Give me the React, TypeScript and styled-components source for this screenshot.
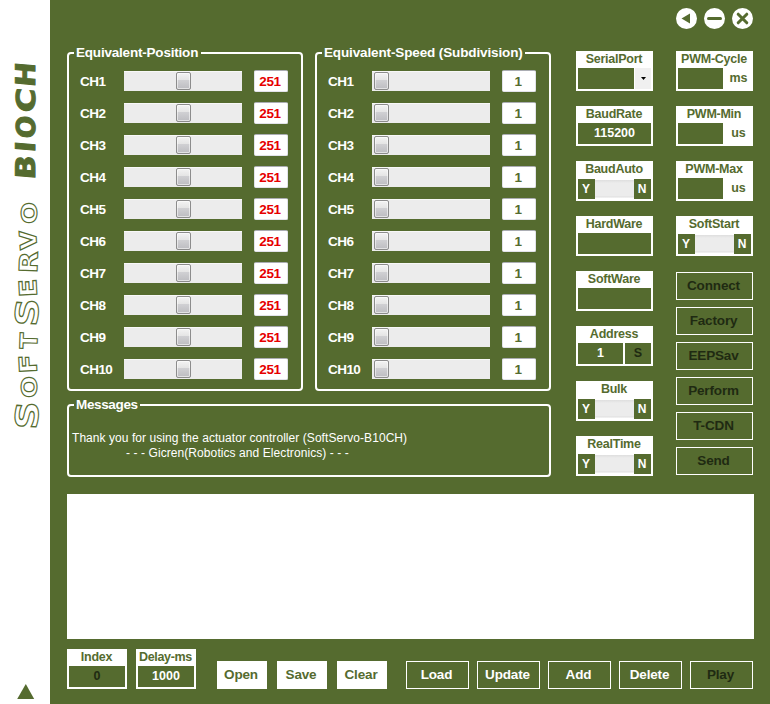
import React from 'react';
import styled, { createGlobalStyle } from 'styled-components';

const olive = '#556b2f';
const ink = '#1f2a12';

const GlobalStyle = createGlobalStyle`
  * { box-sizing: border-box; }
  body { margin: 0; background: #fff; }
`;

const Window = styled.div`
  display: flex;
  width: 770px;
  height: 704px;
  overflow: hidden;
  background: ${olive};
  font-family: 'Liberation Sans', Arial, sans-serif;
  font-weight: bold;
  font-size: 13px;
  line-height: 15px;
  white-space: nowrap;
`;

const Rail = styled.aside`
  flex: none;
  width: 50px;
  height: 704px;
  background: #fff;
  svg { display: block; }
`;

const Main = styled.main`
  flex: 1;
  display: flex;
  flex-direction: column;
  padding: 0 16px 0 17px;
`;

const TitleBar = styled.header`
  display: flex;
  justify-content: flex-end;
  gap: 7px;
  height: 51px;
  padding: 8px 1px 0 0;
`;

const RoundButton = styled.button`
  width: 21px;
  height: 21px;
  padding: 0;
  border: 0;
  border-radius: 50%;
  background: #fff;
  svg { display: block; }
`;

const Body = styled.div`
  display: flex;
  height: 443px;
`;

const LeftColumn = styled.div`
  width: 484px;
  padding-top: 1px;
`;

const Groups = styled.div`
  display: flex;
  justify-content: space-between;
`;

const Group = styled.section<{ $h: number }>`
  position: relative;
  width: 236px;
  height: ${p => p.$h}px;
  border: 2px solid #fff;
  border-radius: 4px;
  padding: 16px 0 0 11px;
`;

const MessageGroup = styled(Group)`
  width: 484px;
  margin-top: 13px;
  padding: 25px 0 0 3px;
`;

const Legend = styled.h2<{ $w: number; $ls: number }>`
  position: absolute;
  top: -10px;
  left: 5px;
  width: ${p => p.$w}px;
  margin: 0;
  padding-left: 2px;
  background: ${olive};
  color: #fff;
  font-size: 13.5px;
  line-height: 17px;
  letter-spacing: ${p => p.$ls}px;
`;

const Channel = styled.div`
  display: flex;
  align-items: center;
  height: 22px;
  margin-bottom: 10px;
`;

const ChannelName = styled.label`
  width: 44px;
  color: #fff;
  font-size: 13.5px;
  letter-spacing: -0.55px;
`;

const Track = styled.div<{ $start: number }>`
  width: 118px;
  height: 20px;
  padding: 1px 0 0 ${p => p.$start}px;
  background: #ececec;
  border-top: 1px solid #f8f8f8;
`;

const Thumb = styled.div`
  width: 15px;
  height: 18px;
  margin-top: -1px;
  border: 1px solid #8c8c8c;
  border-radius: 2px;
  background: linear-gradient(#f3f3f3 0, #e4e4e4 45%, #d0d0d3 46%, #bdbdc1 100%);
  box-shadow: inset 0 0 0 1px rgba(255, 255, 255, 0.55);
`;

const Value = styled.output<{ $red?: boolean }>`
  width: 34px;
  height: 22px;
  margin-left: 12px;
  padding-right: 2px;
  border: 1px solid #e2e3ea;
  border-top-color: #abadb3;
  border-radius: 2px;
  background: #fff;
  color: ${p => (p.$red ? '#e60000' : olive)};
  font-size: 13.5px;
  line-height: 21px;
  letter-spacing: -0.4px;
  text-align: center;
`;

const Message = styled.p<{ $indent?: number; $ls: number }>`
  margin: 0;
  padding-left: ${p => p.$indent ?? 0}px;
  color: #fff;
  font-size: 12px;
  font-weight: normal;
  line-height: 15px;
  letter-spacing: ${p => p.$ls}px;
`;

const FieldColumn = styled.div<{ $ml: number }>`
  display: flex;
  flex-direction: column;
  gap: 15px;
  width: 77px;
  margin-left: ${p => p.$ml}px;
`;

const Field = styled.div<{ $w?: number }>`
  width: ${p => p.$w ?? 77}px;
  height: 40px;
  padding: 0 2px;
  background: #fff;
`;

const FieldLabel = styled.div<{ $ls?: number }>`
  height: 17px;
  padding-right: 1px;
  color: ${olive};
  font-size: 12.5px;
  line-height: 16px;
  text-align: center;
  letter-spacing: ${p => p.$ls ?? -0.25}px;
`;

const FieldRow = styled.div`
  display: flex;
  height: 21px;
  gap: 2px;
`;

const Cell = styled.div<{ $w?: number; $dark?: boolean }>`
  ${p => (p.$w ? `width: ${p.$w}px;` : 'flex: 1;')}
  background: ${olive};
  color: ${p => (p.$dark ? ink : '#fff')};
  font-size: 12.5px;
  line-height: 21px;
  text-align: center;
`;

const Unit = styled.span`
  flex: 1;
  padding-left: 1px;
  color: ${olive};
  font-size: 12.5px;
  line-height: 21px;
  text-align: center;
`;

const DropButton = styled.button`
  display: flex;
  align-items: center;
  justify-content: center;
  width: 16px;
  height: 21px;
  margin-left: -1px;
  padding: 0;
  border: 0;
  background: #f0f0f0;
`;

const SwitchRow = styled.div`
  display: flex;
  height: 20px;
  margin-top: 1px;
`;

const SwitchEnd = styled.span`
  width: 17px;
  padding-right: 1px;
  background: ${olive};
  color: #fff;
  font-size: 12px;
  line-height: 21px;
  text-align: center;
`;

const SwitchTrack = styled.span`
  flex: 1;
  margin-top: 1px;
  background: linear-gradient(#dedede 0, #ececec 3px, #ececec 16px, #dedede 17px, #fff 18px);
`;

const ButtonStack = styled.div`
  display: flex;
  flex-direction: column;
  gap: 7px;
  margin-top: 1px;
`;

const Button = styled.button<{ $w: number; $kind?: 'solid' | 'disabled' }>`
  width: ${p => p.$w}px;
  height: 28px;
  padding: 0 2px 0 0;
  border: 1px solid #fff;
  background: ${p => (p.$kind === 'solid' ? '#fff' : olive)};
  color: ${p => (p.$kind === 'solid' ? olive : p.$kind === 'disabled' ? ink : '#fff')};
  font: bold 13.5px/26px 'Liberation Sans', Arial, sans-serif;
  letter-spacing: -0.15px;
`;

const Sheet = styled.div`
  width: 687px;
  height: 145px;
  background: #fff;
`;

const Footer = styled.footer`
  display: flex;
  align-items: flex-end;
  height: 50px;
`;

const FooterGroup = styled.div<{ $ml: number; $gap: number }>`
  display: flex;
  gap: ${p => p.$gap}px;
  margin-left: ${p => p.$ml}px;
`;

type Glyph = [char: string, bottom: number, length: number, size: number, tilt: number];

// Each letter sits on its own start point along the vertical baseline.
const outlined: Glyph[] = [
  ['S', 430, 28, 31, 4],
  ['O', 398, 22, 22, 0],
  ['F', 373, 19, 24, -3],
  ['T', 349, 16, 24, 2],
  ['S', 327, 28, 31, 4],
  ['E', 296.5, 18, 24, -3],
  ['R', 273.5, 22, 25, 2],
  ['V', 249, 19, 23, -4],
  ['O', 224, 22, 22, 0],
];

const solid: Glyph[] = [
  ['B', 180, 24, 27, 0],
  ['I', 153, 11, 27, 0],
  ['O', 139, 22.5, 26, 0],
  ['C', 113, 24, 26, 0],
  ['H', 87.5, 24.5, 27, 0],
];

function Wordmark() {
  return (
    <svg width="50" height="704" viewBox="0 0 50 704">
      <g fill="#fff" stroke={olive} strokeWidth="1.1" fontFamily="'DejaVu Sans', sans-serif" fontWeight="bold">
        {outlined.map(([c, y, len, size, tilt], i) => (
          <text key={i} transform={`translate(37 ${y}) rotate(${-90 + tilt})`} fontSize={size} textLength={len} lengthAdjust="spacingAndGlyphs">{c}</text>
        ))}
      </g>
      <g fill={olive} stroke={olive} strokeWidth="1" fontFamily="'DejaVu Sans', sans-serif" fontWeight="bold">
        {solid.map(([c, y, len, size], i) => (
          <text key={i} transform={`translate(35.2 ${y}) rotate(-90) skewX(-5)`} fontSize={size} textLength={len} lengthAdjust="spacingAndGlyphs">{c}</text>
        ))}
      </g>
      <path d="M25.8 684 L34.2 699 H17.2 Z" fill={olive} />
    </svg>
  );
}

const channels = Array.from({ length: 10 }, (_, i) => `CH${i + 1}`);

function ChannelGroup({ title, width, spacing, start, value, red }: {
  title: string; width: number; spacing: number; start: number; value: string; red?: boolean;
}) {
  return (
    <Group $h={339}>
      <Legend $w={width} $ls={spacing}>{title}</Legend>
      {channels.map(name => (
        <Channel key={name}>
          <ChannelName>{name}</ChannelName>
          <Track $start={start}><Thumb /></Track>
          <Value $red={red}>{value}</Value>
        </Channel>
      ))}
    </Group>
  );
}

function TextField({ label, value }: { label: string; value?: string }) {
  return (
    <Field>
      <FieldLabel>{label}</FieldLabel>
      <FieldRow><Cell>{value}</Cell></FieldRow>
    </Field>
  );
}

function UnitField({ label, unit }: { label: string; unit: string }) {
  return (
    <Field>
      <FieldLabel>{label}</FieldLabel>
      <FieldRow><Cell $w={45} /><Unit>{unit}</Unit></FieldRow>
    </Field>
  );
}

function SwitchField({ label }: { label: string }) {
  return (
    <Field>
      <FieldLabel>{label}</FieldLabel>
      <SwitchRow><SwitchEnd>Y</SwitchEnd><SwitchTrack /><SwitchEnd>N</SwitchEnd></SwitchRow>
    </Field>
  );
}

export default function App() {
  return (
    <>
      <GlobalStyle />
      <Window>
        <Rail><Wordmark /></Rail>
        <Main>
          <TitleBar>
            <RoundButton aria-label="Back">
              <svg width="21" height="21"><path d="M5.5 10.5 L14 5.5 V15.5 Z" fill={olive} /></svg>
            </RoundButton>
            <RoundButton aria-label="Minimize">
              <svg width="21" height="21"><path d="M4.5 10.5 H16.5" stroke={olive} strokeWidth="3" strokeLinecap="round" /></svg>
            </RoundButton>
            <RoundButton aria-label="Close">
              <svg width="21" height="21"><path d="M6.2 6.2 L14.8 14.8 M14.8 6.2 L6.2 14.8" stroke={olive} strokeWidth="3" strokeLinecap="round" /></svg>
            </RoundButton>
          </TitleBar>
          <Body>
            <LeftColumn>
              <Groups>
                <ChannelGroup title="Equivalent-Position" width={127} spacing={-0.2} start={52} value="251" red />
                <ChannelGroup title="Equivalent-Speed (Subdivision)" width={203} spacing={-0.13} start={2} value="1" />
              </Groups>
              <MessageGroup as="section" $h={73}>
                <Legend $w={66} $ls={-0.35}>Messages</Legend>
                <Message $ls={0.06}>Thank you for using the actuator controller (SoftServo-B10CH)</Message>
                <Message $indent={54} $ls={0.08}>- - - Gicren(Robotics and Electronics) - - -</Message>
              </MessageGroup>
            </LeftColumn>
            <FieldColumn $ml={25}>
              <Field>
                <FieldLabel>SerialPort</FieldLabel>
                <FieldRow>
                  <Cell $w={56} />
                  <DropButton aria-label="Choose port">
                    <svg width="5" height="3"><path d="M0 0 H5 L2.5 3 Z" fill="#000" /></svg>
                  </DropButton>
                </FieldRow>
              </Field>
              <TextField label="BaudRate" value="115200" />
              <SwitchField label="BaudAuto" />
              <TextField label="HardWare" />
              <TextField label="SoftWare" />
              <Field>
                <FieldLabel>Address</FieldLabel>
                <FieldRow><Cell $w={45}>1</Cell><Cell $dark>S</Cell></FieldRow>
              </Field>
              <SwitchField label="Bulk" />
              <SwitchField label="RealTime" />
            </FieldColumn>
            <FieldColumn $ml={23}>
              <UnitField label="PWM-Cycle" unit="ms" />
              <UnitField label="PWM-Min" unit="us" />
              <UnitField label="PWM-Max" unit="us" />
              <SwitchField label="SoftStart" />
              <ButtonStack>
                {['Connect', 'Factory', 'EEPSav', 'Perform', 'T-CDN', 'Send'].map(t => (
                  <Button key={t} $w={77} $kind="disabled">{t}</Button>
                ))}
              </ButtonStack>
            </FieldColumn>
          </Body>
          <Sheet />
          <Footer>
            <Field $w={60}>
              <FieldLabel>Index</FieldLabel>
              <FieldRow><Cell $dark>0</Cell></FieldRow>
            </Field>
            <FooterGroup $ml={9} $gap={0}>
              <Field $w={60}>
                <FieldLabel $ls={-0.35}>Delay-ms</FieldLabel>
                <FieldRow><Cell>1000</Cell></FieldRow>
              </Field>
            </FooterGroup>
            <FooterGroup $ml={21} $gap={10}>
              {['Open', 'Save', 'Clear'].map(t => <Button key={t} $w={50} $kind="solid">{t}</Button>)}
            </FooterGroup>
            <FooterGroup $ml={19} $gap={8}>
              {['Load', 'Update', 'Add', 'Delete'].map(t => <Button key={t} $w={63}>{t}</Button>)}
              <Button $w={63} $kind="disabled">Play</Button>
            </FooterGroup>
          </Footer>
        </Main>
      </Window>
    </>
  );
}
